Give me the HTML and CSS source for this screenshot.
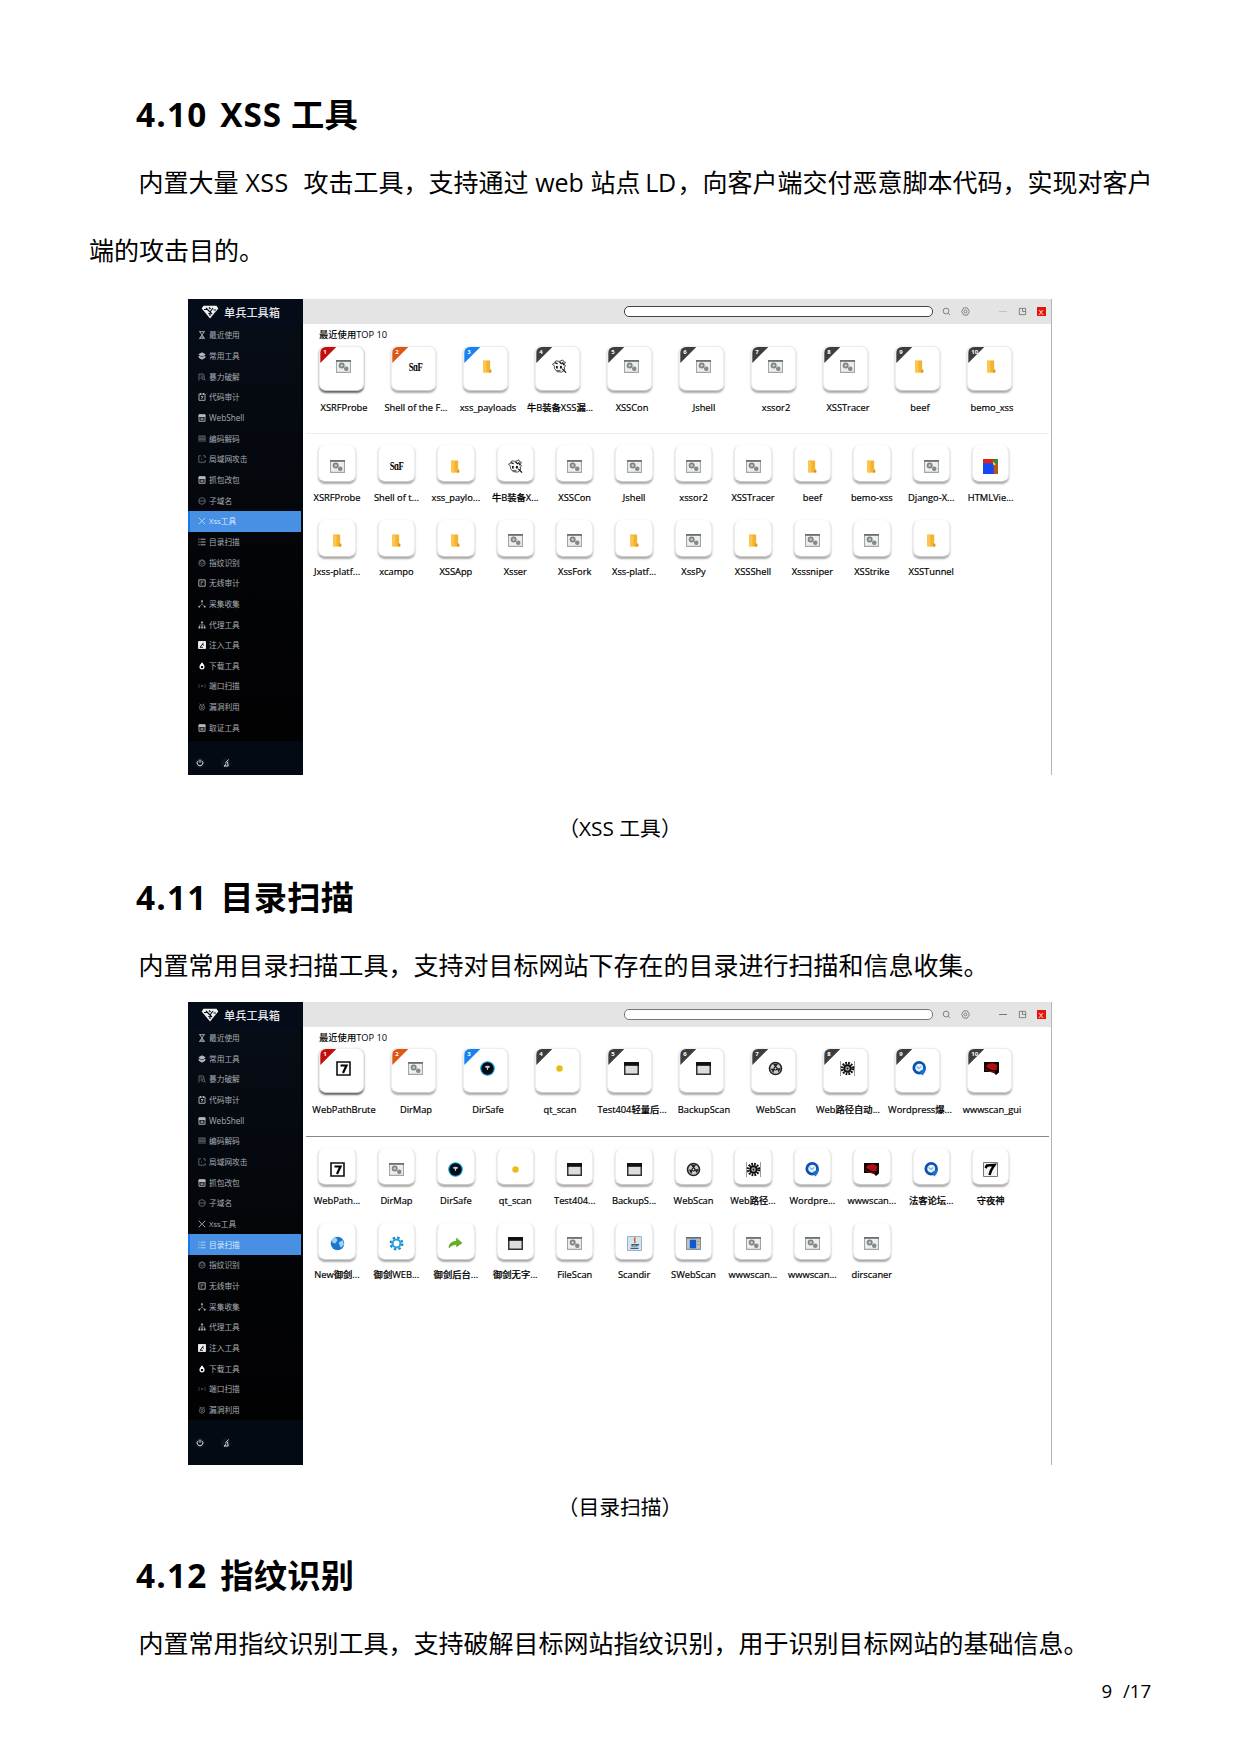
FILE: index.html
```html
<!DOCTYPE html>
<html lang="zh-CN">
<head>
<meta charset="utf-8">
<title>单兵工具箱</title>
<link rel="stylesheet" href="styles.css">
</head>
<body>
<svg class="defs" width="0" height="0">
  <symbol id="cfg" viewBox="0 0 14 12"><path d="M.5.5h13v11H.5z" fill="#eceff0" stroke="#a2a6a8"/><path d="M0 .8h14" stroke="#6c6c6c" stroke-width="1.6"/><circle cx="5.300" cy="5" r="2" fill="#ccc" stroke="#808486" stroke-width="1.600"/><circle cx="9.600" cy="8" r="1.600" fill="#888" stroke="#808486"/></symbol>
  <symbol id="folder" viewBox="0 0 14 12"><path d="M3 .5h6.500v8.500l1 .5v2H3z" fill="#f3b32f"/><path d="M3 .5l3 1v10.500l-3-1z" fill="#ffc64f"/><path d="M9.500 8.500l1 .7v2.300H8z" fill="#d9931a"/></symbol>
  <symbol id="cow" viewBox="0 0 16 15"><path d="M2.500 4l1.500-2.500 4 .5 3.500-1.500 1 2 2 .500-1.500 2 1.500 2-1.500 1 .500 3-3 2.500-5-.500-3-3.500V7L.500 5z" fill="#f4f4f4" stroke="#333" stroke-width=".900"/><path d="M3 3.500l3 1M8 2.500l2.500 2.500M11 3l2 3M11 10l4 4" stroke="#111" stroke-width="1.400"/><path d="M4.300 7h1.800v2.500H4.300zM8.500 7h2v2.500h-2z" fill="#111"/><path d="M5 12h4" stroke="#333"/></symbol>
  <symbol id="html" viewBox="0 0 14 14"><path d="M0 0h14v14H0z" fill="#1747f5"/><path d="M0 0h10v4H0z" fill="#d8261c"/><path d="M10 0h4v5h-4z" fill="#2f8d2b"/><path d="M10 4h4v10h-4z" fill="#b4581a"/><path d="M9 2l3 3-2 1z" fill="#ffe060"/></symbol>
  <symbol id="seven" viewBox="0 0 15 15"><path d="M1 1h13v13H1z" fill="#fff" stroke="#111" stroke-width="1.600"/><path d="M4.500 4.500h6l-3.500 7.500" fill="none" stroke="#000" stroke-width="2.200"/></symbol>
  <symbol id="hand7" viewBox="0 0 15 15"><path d="M.5.5h14v14H.5z" fill="#f4f4f4" stroke="#777"/><path d="M2.500 6l1.500-2.500 7.500-.500c-2 3-4 5-5 10" fill="none" stroke="#000" stroke-width="2.500"/></symbol>
  <symbol id="safe" viewBox="0 0 16 16"><circle cx="8" cy="8" r="7.200" fill="#020a10" stroke="#12a8df" stroke-width="1.200"/><path d="M5 6.500c1-2 5-2 6 0L8.600 7.600v1.900H7.400V7.600z" fill="#c5cbd8"/></symbol>
  <symbol id="dot" viewBox="0 0 14 14"><circle cx="7" cy="7" r="3" fill="#e9bd16"/></symbol>
  <symbol id="win" viewBox="0 0 14 12"><path d="M.7.7h12.600v10.600H.7z" fill="#ddd" stroke="#333" stroke-width="1.400"/><path d="M0 0h14v3.500H0z" fill="#111"/></symbol>
  <symbol id="fan" viewBox="0 0 14 14"><circle cx="7" cy="7" r="5.600" fill="#ccc" stroke="#222" stroke-width="1.500"/><path d="M7 6L4.500 2.500h5zM8 7l4-.500-2 4zM6 7.500l-1 4L2.500 7z" fill="#222"/><circle cx="7" cy="7" r="1.400" fill="#ddd" stroke="#111"/></symbol>
  <symbol id="spike" viewBox="0 0 15 15"><path d="M.5 0v15M14.500 0v15" stroke="#999"/><circle cx="7.500" cy="7.500" r="5.300" fill="none" stroke="#111" stroke-width="2.800" stroke-dasharray="1.700 1.070"/><circle cx="7.500" cy="7.500" r="3.200" fill="#bbb" stroke="#111" stroke-width="2"/><circle cx="7.500" cy="7.500" r="1" fill="#111"/></symbol>
  <symbol id="q" viewBox="0 0 14 14"><circle cx="6.700" cy="6.300" r="5" fill="#e8f3fc" stroke="#0e51ae" stroke-width="2.600"/><path d="M13 6.500c0 3-1.500 5-3.500 7L7 9.500z" fill="#1c6fd0"/><path d="M4.300 5l2.200 2 2.200-2" fill="none" stroke="#6db0ea"/></symbol>
  <symbol id="hat" viewBox="0 0 15 13"><path d="M0 0h15v10.500l-3 2.500-2-2-3-1H0z" fill="#120606"/><path d="M2 4c2-3 7-4 11-1l-.500 5c-3 1-7 0-10.500-4z" fill="#b30f12"/><path d="M1 6.500c3 3 6 3.500 10 3.500" stroke="#8d1515" fill="none"/></symbol>
  <symbol id="globe" viewBox="0 0 14 14"><circle cx="7" cy="7" r="6.300" fill="#1f74d2"/><path d="M2 3c3-3 4-1 5 1L5 7 2 6zM8 6l4-2 1 4-3 3z" fill="#9cd4f6"/></symbol>
  <symbol id="gear" viewBox="0 0 14 14"><circle cx="7" cy="7" r="5.500" fill="none" stroke="#168bc8" stroke-width="2" stroke-dasharray="2.300 2.020"/><circle cx="7" cy="7" r="3.700" fill="#fff" stroke="#28a0dc" stroke-width="2"/></symbol>
  <symbol id="share" viewBox="0 0 14 12"><path d="M1 10c0-4 3-6 7-6V1l5 4.500L8 9V7C5 7 3 8 1 10z" fill="#62b61c" stroke="#438a12" stroke-width=".500"/></symbol>
  <symbol id="java" viewBox="0 0 15 15"><path d="M.5.5h14v14H.5z" fill="#d6e4ee" stroke="#9ab3c4"/><path d="M8.500 1.500c-3 2 1 3-1 5.500" fill="none" stroke="#e2561d" stroke-width="1.500"/><path d="M5 8.500h5v1.500H5zM3.500 12.300h8M10 8.500h1.500v1" fill="none" stroke="#345c85" stroke-width="1.200"/></symbol>
  <symbol id="sweb" viewBox="0 0 14 12"><path d="M.5.5h13v11H.5z" fill="#bfc6cb" stroke="#8a9196"/><path d="M3.500 2.500h6v8h-6z" fill="#0b5bd0"/><path d="M0 .8h14" stroke="#555"/><path d="M10.500 4h2M10.500 7h2" stroke="#e57832"/></symbol>

  <symbol id="n-hour" viewBox="0 0 8 8"><path d="M1 .7h6M1 7.300h6M2 1l4 6M6 1L2 7M2.500 6h3"/></symbol>
  <symbol id="n-stack" viewBox="0 0 8 8"><path d="M4 .8L7.200 2.500 4 4.200.8 2.500zM1 4.200l3 1.500 3-1.500v1.300L4 7.200 1 5.500z" fill="currentColor"/></symbol>
  <symbol id="n-crack" viewBox="0 0 8 8"><path d="M1 7.500V1h4l1 1v2M2.500 3h2M2.500 5h1.500"/><circle cx="5.300" cy="5.300" r="1.300"/><path d="M6 6l1.500 1.500"/></symbol>
  <symbol id="n-code" viewBox="0 0 8 8"><path d="M1 1h6v6.300H1zM2.500 0v2M5.500 0v2M3 3.500h2L3.500 6"/></symbol>
  <symbol id="n-doc" viewBox="0 0 8 8"><path d="M1 .7h6v6.600H1zM1 2.500h6M2.500 4.200h3M2.500 5.700h3"/><path d="M1 1h6v1.500H1z" fill="currentColor"/></symbol>
  <symbol id="n-grid" viewBox="0 0 8 8"><path d="M1 1v6M3 1v6M5 1v6M7 1v6M.5 1h7M.5 4h7"/></symbol>
  <symbol id="n-lan" viewBox="0 0 8 8"><path d="M3 .8H.8v6.400h6.400V5M5 .8h2.200V3M3 4h1"/></symbol>
  <symbol id="n-sub" viewBox="0 0 8 8"><circle cx="4" cy="4" r="3.300"/><path d="M1 4h6"/></symbol>
  <symbol id="n-x" viewBox="0 0 8 8"><path d="M.8.8l2.500 2.500v1.400L.8 7.200M7.200.8L4.700 3.300v1.400l2.500 2.500"/></symbol>
  <symbol id="n-list" viewBox="0 0 8 8"><path d="M.3 1.200h1.200M2.500 1.200h5M.3 4h1.200M2.500 4h5M.3 6.800h1.200M2.500 6.800h5"/></symbol>
  <symbol id="n-finger" viewBox="0 0 8 8"><circle cx="4" cy="4" r="3.200"/><path d="M2 5V3.500a2 2 0 0 1 4 0V5M4 3.500V6"/></symbol>
  <symbol id="n-wifi" viewBox="0 0 8 8"><path d="M.8.8h6.400v6.400H.8zM2.500 3h3M2.500 5h1.500"/></symbol>
  <symbol id="n-tree" viewBox="0 0 8 8"><path d="M4 1.500v2.500L1.500 6.500M4 4l2.500 2.500" stroke-width=".5"/><path d="M3.400.6h1.200v1.200H3.400zM.7 6h1.200v1.200H.7zM6.100 6h1.200v1.200H6.100z" fill="currentColor" stroke-width=".5"/></symbol>
  <symbol id="n-org" viewBox="0 0 8 8"><path d="M4 1v3M1.500 6V4h5v2M4 4v2" stroke-width=".5"/><path d="M3.300.7h1.400v1.400H3.300zM.7 5.700h1.400v1.600H.7zM3.300 5.700h1.400v1.600H3.300zM5.900 5.700h1.400v1.600H5.900z" fill="currentColor" stroke-width=".4"/></symbol>
  <symbol id="n-inject" viewBox="0 0 8 8"><path d="M.5.5h7v7h-7z" fill="#eee" stroke="#eee"/><path d="M2 6.300l3.500-4.500M2 6.300h3M4 3l2 1.500" stroke="#05090f"/></symbol>
  <symbol id="n-down" viewBox="0 0 8 8"><path d="M4 .8L2.200 3.500h3.600z" fill="currentColor"/><circle cx="4" cy="5" r="1.900" stroke-width="1.300"/></symbol>
  <symbol id="n-port" viewBox="0 0 8 8"><path d="M1 2v4M7 2v4M3 3l2 2M5 3L3 5" opacity=".600"/></symbol>
  <symbol id="n-bug" viewBox="0 0 8 8"><circle cx="4" cy="4.500" r="2.700"/><circle cx="4" cy="4.500" r="1"/><path d="M1.500.8L3 2M6.500.8L5 2"/></symbol>

  <symbol id="logo" viewBox="0 0 18 14"><path d="M2.500.8h13l1.800 2.700L9 13.500.7 3.500z" fill="#f0f0f0"/><path d="M5 3l6 6M12 3L7.500 9M3 4.500h3M12.500 5H15M8 2.500l1.500 1.500M9 8v3" fill="none" stroke="#0a1220" stroke-width="1.200"/></symbol>
  <symbol id="find" viewBox="0 0 10 10"><circle cx="4.500" cy="4.500" r="3.200"/><path d="M7 7l2 2"/></symbol>
  <symbol id="cog" viewBox="0 0 10 10"><path d="M3 1h4l2.300 4L7 9H3L.7 5z"/><circle cx="5" cy="5" r="1.600"/></symbol>
  <symbol id="max" viewBox="0 0 10 10"><path d="M1.500 1.500h7v7h-7zM5 1.500V5h3.500"/></symbol>
  <symbol id="power" viewBox="0 0 10 10"><path d="M3.300 2.700a2.800 2.800 0 1 0 3.400 0M5 1.500v3.300"/></symbol>
  <symbol id="brush" viewBox="0 0 10 10"><path d="M7.500 1.500L4.500 5M6.500 4l.7 4H3c1.500 0 1.500-2 2-2.500"/></symbol>
</svg>

<main class="page">
  <h2>4.10 <span class="gap"><span class="en">XSS</span> 工具</span></h2>
  <p class="para"><span class="row indent">内置大量<span class="xss">XSS</span>攻击工具，支持通过<span class="web">web</span>站点<span class="ld">LD</span>，向客户端交付恶意脚本代码，实现对客户</span><span class="row">端的攻击目的。</span></p>

  <figure class="app first">
    <aside class="side">
      <header class="brand"><svg><use href="#logo"/></svg>单兵工具箱</header>
      <ul class="nav">
        <li><svg><use href="#n-hour"/></svg>最近使用</li>
        <li><svg><use href="#n-stack"/></svg>常用工具</li>
        <li><svg class="dim"><use href="#n-crack"/></svg>暴力破解</li>
        <li><svg><use href="#n-code"/></svg>代码审计</li>
        <li class="en"><svg><use href="#n-doc"/></svg>WebShell</li>
        <li><svg class="dim"><use href="#n-grid"/></svg>编码解码</li>
        <li><svg class="dim"><use href="#n-lan"/></svg>局域网攻击</li>
        <li><svg><use href="#n-doc"/></svg>抓包改包</li>
        <li><svg class="dim"><use href="#n-sub"/></svg>子域名</li>
        <li class="on"><svg><use href="#n-x"/></svg>Xss工具</li>
        <li><svg><use href="#n-list"/></svg>目录扫描</li>
        <li><svg class="dim"><use href="#n-finger"/></svg>指纹识别</li>
        <li><svg><use href="#n-wifi"/></svg>无线审计</li>
        <li><svg><use href="#n-tree"/></svg>采集收集</li>
        <li><svg><use href="#n-org"/></svg>代理工具</li>
        <li><svg><use href="#n-inject"/></svg>注入工具</li>
        <li><svg class="lit"><use href="#n-down"/></svg>下载工具</li>
        <li><svg class="dim"><use href="#n-port"/></svg>端口扫描</li>
        <li><svg class="dim"><use href="#n-bug"/></svg>漏洞利用</li>
        <li><svg><use href="#n-doc"/></svg>取证工具</li>
      </ul>
      <footer class="tools"><svg><use href="#power"/></svg><svg><use href="#brush"/></svg></footer>
    </aside>
    <div class="main">
      <header class="bar"><span class="search"></span><svg><use href="#find"/></svg><svg><use href="#cog"/></svg><i class="min"></i><svg class="box"><use href="#max"/></svg><span class="close">X</span></header>
      <section class="recent">
        <h3>最近使用TOP 10</h3>
        <ul class="top">
          <li><span class="tile hot"><em class="r1">1</em><svg><use href="#cfg"/></svg></span>XSRFProbe</li>
          <li><span class="tile"><em class="r2">2</em><b>SɑF</b></span>Shell of the F...</li>
          <li><span class="tile"><em class="r3">3</em><svg><use href="#folder"/></svg></span>xss_payloads</li>
          <li><span class="tile"><em>4</em><svg><use href="#cow"/></svg></span>牛B装备XSS漏...</li>
          <li><span class="tile"><em>5</em><svg><use href="#cfg"/></svg></span>XSSCon</li>
          <li><span class="tile"><em>6</em><svg><use href="#cfg"/></svg></span>Jshell</li>
          <li><span class="tile"><em>7</em><svg><use href="#cfg"/></svg></span>xssor2</li>
          <li><span class="tile"><em>8</em><svg><use href="#cfg"/></svg></span>XSSTracer</li>
          <li><span class="tile"><em>9</em><svg><use href="#folder"/></svg></span>beef</li>
          <li><span class="tile"><em>10</em><svg><use href="#folder"/></svg></span>bemo_xss</li>
        </ul>
      </section>
      <ul class="all">
        <li><span class="tile"><svg><use href="#cfg"/></svg></span>XSRFProbe</li>
        <li><span class="tile"><b>SɑF</b></span>Shell of t...</li>
        <li><span class="tile"><svg><use href="#folder"/></svg></span>xss_paylo...</li>
        <li><span class="tile"><svg><use href="#cow"/></svg></span>牛B装备X...</li>
        <li><span class="tile"><svg><use href="#cfg"/></svg></span>XSSCon</li>
        <li><span class="tile"><svg><use href="#cfg"/></svg></span>Jshell</li>
        <li><span class="tile"><svg><use href="#cfg"/></svg></span>xssor2</li>
        <li><span class="tile"><svg><use href="#cfg"/></svg></span>XSSTracer</li>
        <li><span class="tile"><svg><use href="#folder"/></svg></span>beef</li>
        <li><span class="tile"><svg><use href="#folder"/></svg></span>bemo-xss</li>
        <li><span class="tile"><svg><use href="#cfg"/></svg></span>Django-X...</li>
        <li><span class="tile"><svg><use href="#html"/></svg></span>HTMLVie...</li>
        <li><span class="tile"><svg><use href="#folder"/></svg></span>Jxss-platf...</li>
        <li><span class="tile"><svg><use href="#folder"/></svg></span>xcampo</li>
        <li><span class="tile"><svg><use href="#folder"/></svg></span>XSSApp</li>
        <li><span class="tile"><svg><use href="#cfg"/></svg></span>Xsser</li>
        <li><span class="tile"><svg><use href="#cfg"/></svg></span>XssFork</li>
        <li><span class="tile"><svg><use href="#folder"/></svg></span>Xss-platf...</li>
        <li><span class="tile"><svg><use href="#cfg"/></svg></span>XssPy</li>
        <li><span class="tile"><svg><use href="#folder"/></svg></span>XSSShell</li>
        <li><span class="tile"><svg><use href="#cfg"/></svg></span>Xsssniper</li>
        <li><span class="tile"><svg><use href="#cfg"/></svg></span>XSStrike</li>
        <li><span class="tile"><svg><use href="#folder"/></svg></span>XSSTunnel</li>
      </ul>
    </div>
  </figure>
  <p class="caption">（XSS 工具）</p>

  <h2>4.11 <span class="gap">目录扫描</span></h2>
  <p class="para"><span class="row indent">内置常用目录扫描工具，支持对目标网站下存在的目录进行扫描和信息收集。</span></p>

  <figure class="app second">
    <aside class="side">
      <header class="brand"><svg><use href="#logo"/></svg>单兵工具箱</header>
      <ul class="nav">
        <li><svg><use href="#n-hour"/></svg>最近使用</li>
        <li><svg><use href="#n-stack"/></svg>常用工具</li>
        <li><svg class="dim"><use href="#n-crack"/></svg>暴力破解</li>
        <li><svg><use href="#n-code"/></svg>代码审计</li>
        <li class="en"><svg><use href="#n-doc"/></svg>WebShell</li>
        <li><svg class="dim"><use href="#n-grid"/></svg>编码解码</li>
        <li><svg class="dim"><use href="#n-lan"/></svg>局域网攻击</li>
        <li><svg><use href="#n-doc"/></svg>抓包改包</li>
        <li><svg class="dim"><use href="#n-sub"/></svg>子域名</li>
        <li><svg><use href="#n-x"/></svg>Xss工具</li>
        <li class="on"><svg><use href="#n-list"/></svg>目录扫描</li>
        <li><svg class="dim"><use href="#n-finger"/></svg>指纹识别</li>
        <li><svg><use href="#n-wifi"/></svg>无线审计</li>
        <li><svg><use href="#n-tree"/></svg>采集收集</li>
        <li><svg><use href="#n-org"/></svg>代理工具</li>
        <li><svg><use href="#n-inject"/></svg>注入工具</li>
        <li><svg class="lit"><use href="#n-down"/></svg>下载工具</li>
        <li><svg class="dim"><use href="#n-port"/></svg>端口扫描</li>
        <li><svg class="dim"><use href="#n-bug"/></svg>漏洞利用</li>
      </ul>
      <footer class="tools"><svg><use href="#power"/></svg><svg><use href="#brush"/></svg></footer>
    </aside>
    <div class="main">
      <header class="bar"><span class="search"></span><svg><use href="#find"/></svg><svg><use href="#cog"/></svg><i class="min"></i><svg class="box"><use href="#max"/></svg><span class="close">X</span></header>
      <section class="recent">
        <h3>最近使用TOP 10</h3>
        <ul class="top">
          <li><span class="tile hot"><em class="r1">1</em><svg><use href="#seven"/></svg></span>WebPathBrute</li>
          <li><span class="tile"><em class="r2">2</em><svg><use href="#cfg"/></svg></span>DirMap</li>
          <li><span class="tile"><em class="r3">3</em><svg><use href="#safe"/></svg></span>DirSafe</li>
          <li><span class="tile"><em>4</em><svg><use href="#dot"/></svg></span>qt_scan</li>
          <li><span class="tile"><em>5</em><svg><use href="#win"/></svg></span>Test404轻量后...</li>
          <li><span class="tile"><em>6</em><svg><use href="#win"/></svg></span>BackupScan</li>
          <li><span class="tile"><em>7</em><svg><use href="#fan"/></svg></span>WebScan</li>
          <li><span class="tile"><em>8</em><svg><use href="#spike"/></svg></span>Web路径自动...</li>
          <li><span class="tile"><em>9</em><svg><use href="#q"/></svg></span>Wordpress爆...</li>
          <li><span class="tile"><em>10</em><svg><use href="#hat"/></svg></span>wwwscan_gui</li>
        </ul>
      </section>
      <ul class="all">
        <li><span class="tile"><svg><use href="#seven"/></svg></span>WebPath...</li>
        <li><span class="tile"><svg><use href="#cfg"/></svg></span>DirMap</li>
        <li><span class="tile"><svg><use href="#safe"/></svg></span>DirSafe</li>
        <li><span class="tile"><svg><use href="#dot"/></svg></span>qt_scan</li>
        <li><span class="tile"><svg><use href="#win"/></svg></span>Test404...</li>
        <li><span class="tile"><svg><use href="#win"/></svg></span>BackupS...</li>
        <li><span class="tile"><svg><use href="#fan"/></svg></span>WebScan</li>
        <li><span class="tile"><svg><use href="#spike"/></svg></span>Web路径...</li>
        <li><span class="tile"><svg><use href="#q"/></svg></span>Wordpre...</li>
        <li><span class="tile"><svg><use href="#hat"/></svg></span>wwwscan...</li>
        <li><span class="tile"><svg><use href="#q"/></svg></span>法客论坛...</li>
        <li><span class="tile"><svg><use href="#hand7"/></svg></span>守夜神</li>
        <li><span class="tile"><svg><use href="#globe"/></svg></span>New御剑...</li>
        <li><span class="tile"><svg><use href="#gear"/></svg></span>御剑WEB...</li>
        <li><span class="tile"><svg><use href="#share"/></svg></span>御剑后台...</li>
        <li><span class="tile"><svg><use href="#win"/></svg></span>御剑无字...</li>
        <li><span class="tile"><svg><use href="#cfg"/></svg></span>FileScan</li>
        <li><span class="tile"><svg><use href="#java"/></svg></span>Scandir</li>
        <li><span class="tile"><svg><use href="#sweb"/></svg></span>SWebScan</li>
        <li><span class="tile"><svg><use href="#cfg"/></svg></span>wwwscan...</li>
        <li><span class="tile"><svg><use href="#cfg"/></svg></span>wwwscan...</li>
        <li><span class="tile"><svg><use href="#cfg"/></svg></span>dirscaner</li>
      </ul>
    </div>
  </figure>
  <p class="caption">（目录扫描）</p>

  <h2>4.12 <span class="gap">指纹识别</span></h2>
  <p class="para"><span class="row indent">内置常用指纹识别工具，支持破解目标网站指纹识别，用于识别目标网站的基础信息。</span></p>
  <footer class="pageno"><span>9</span><span>/17</span></footer>
</main>
</body>
</html>
```

FILE: styles.css
```css
* { box-sizing: border-box; }
body { margin: 0; background: #fff; color: #000; font-family: "Open Sans", "Noto Sans CJK SC", sans-serif; }
ul { margin: 0; padding: 0; list-style: none; }
.defs { position: absolute; }
.page { width: 1240px; height: 1754px; padding: 80px 89px 0; overflow: hidden; }

h2 { margin: 0; padding-left: 47px; height: 68px; line-height: 68px; font-size: 33.3px; font-weight: 700; letter-spacing: 1.2px; white-space: nowrap; }
h2 .gap { margin-left: 3px; letter-spacing: .2px; }
h2 .en { letter-spacing: 1px; }
.para { margin: 0; font-size: 25px; }
.row { display: block; height: 68px; line-height: 68px; white-space: nowrap; }
.indent { padding-left: 49.500px; }
.xss, .web, .ld { display: inline-block; text-align: center; }
.xss { width: 65px; padding-right: 8px; letter-spacing: .4px; }
.web { width: 62px; }
.ld { width: 37px; padding-left: 3px; letter-spacing: -.2px; }
.caption { margin: 19px 0 1px; height: 68px; line-height: 68px; font-size: 20.800px; text-align: center; }
.second + .caption { margin: 8px 0 0; }
.pageno { display: flex; justify-content: flex-end; gap: 11px; height: 28px; line-height: 28px; font-size: 18.700px; letter-spacing: -.1px; }

.app { display: flex; width: 864px; margin: 15px 0 0 99px; border-right: 1px solid #b4b4b4; font-size: 9.300px; }
.app.first { height: 476px; }
.app.second { height: 463px; margin-top: 3px; }

.side { display: flex; flex-direction: column; width: 115px; background: #03060b; color: #a6adb4; }
.brand { display: flex; align-items: center; gap: 5px; height: 26px; padding-left: 13px; background: #040c1a; color: #e6e9ed; font-size: 11.200px; font-weight: 500; }
.brand svg { width: 18px; height: 14px; }
.nav { flex: 1; width: 112.500px; background: linear-gradient(#070d16, #030407 60%, #020203); font-size: 7.700px; }
.nav li { display: flex; align-items: center; gap: 3px; height: 20.670px; padding-left: 10px; line-height: 12px; }
.nav .en { font-size: 8.200px; }
.nav svg { width: 8px; height: 8px; fill: none; stroke: currentColor; stroke-width: .9; color: #b4babf; }
.nav svg.dim { color: #666d75; }
.nav svg.lit { color: #fff; }
.nav .on { background: #4790e4; color: #d9ebff; box-shadow: inset 2px 0 #1478f0; }
.nav .on svg { color: #b8d8fb; }
.tools { display: flex; align-items: center; gap: 16px; height: 34px; padding: 10px 0 0 7px; background: #040a14; }
.second .tools { height: 45px; padding-top: 0; }
.tools svg { width: 10px; height: 10px; border-radius: 5px; background: #10161f; fill: none; stroke: #d8dde2; stroke-width: 1; }

.main { flex: 1; }
.bar { display: flex; align-items: center; height: 25px; padding-left: 320.500px; background: #e4e4e4; }
.search { width: 309px; height: 11px; margin-right: 9px; border: 1px solid #444; border-radius: 5px; background: #fff; }
.second .search { border-color: #777; }
.bar svg { width: 9px; height: 9px; margin-right: 10px; fill: none; stroke: #777; }
.min { width: 8px; height: 1px; margin: 0 15px 0 19px; background: #c4c4c4; }
.second .min { background: #777; }
.bar .box { margin: 0 10px 0 -4px; }
.close { width: 9px; height: 9px; background: #e5150b; color: #fff; font-size: 8px; line-height: 9px; text-align: center; }

.recent { height: 110px; margin: 0 2px 0 3px; border-bottom: 1px solid #ededed; }
.second .recent { border-color: #858885; }
h3 { margin: 0; padding: 4px 0 0 13px; height: 22px; line-height: 14px; font-size: 9.300px; font-weight: 500; }
.top { display: flex; padding-left: 2px; }
.top li { width: 72px; text-align: center; line-height: 12px; white-space: nowrap; }
.top li, .all li { font-weight: 500; -webkit-text-stroke: .2px #000; }
.tile { position: relative; display: flex; align-items: center; justify-content: center; background: #fff; border: 1px solid #eee; border-bottom-color: #ccc; box-shadow: 0 1.500px 2px #aaa; -webkit-text-stroke: 0; }
.tile svg { width: 15px; height: 15px; }
.tile b { font: 700 12px/14px "Liberation Serif", serif; letter-spacing: -.600px; transform: scaleX(.72); }
.top .tile { width: 45px; height: 45px; margin: 0 0 11px 11.300px; padding: 0 0 4px 4px; border-radius: 7px; }
.second .top { margin-top: -1px; }
.top .hot { box-shadow: 0 1.500px 2px #666; }
.tile em { position: absolute; left: 0; top: 0; width: 16px; height: 16px; padding: 1px 0 0 3px; border-top-left-radius: 6px; background: #3d3d3f; clip-path: polygon(0 0, 100% 0, 0 100%); color: #fff; font: 700 6px/8px "Open Sans", sans-serif; text-align: left; }
.tile .r1 { background: #c40d0d; }
.tile .r2 { background: #df5614; }
.tile .r3 { background: #1683ee; }

.all { display: grid; grid-template-columns: repeat(12, 59.430px); grid-auto-rows: 74.700px; padding: 11px 0 0 4.300px; }
.all li { text-align: center; line-height: 12px; white-space: nowrap; }
.all .tile { width: 37.500px; height: 37px; margin: 0 0 9.500px 11px; padding-top: 5px; border-radius: 7px; border-top-color: transparent; }
```
